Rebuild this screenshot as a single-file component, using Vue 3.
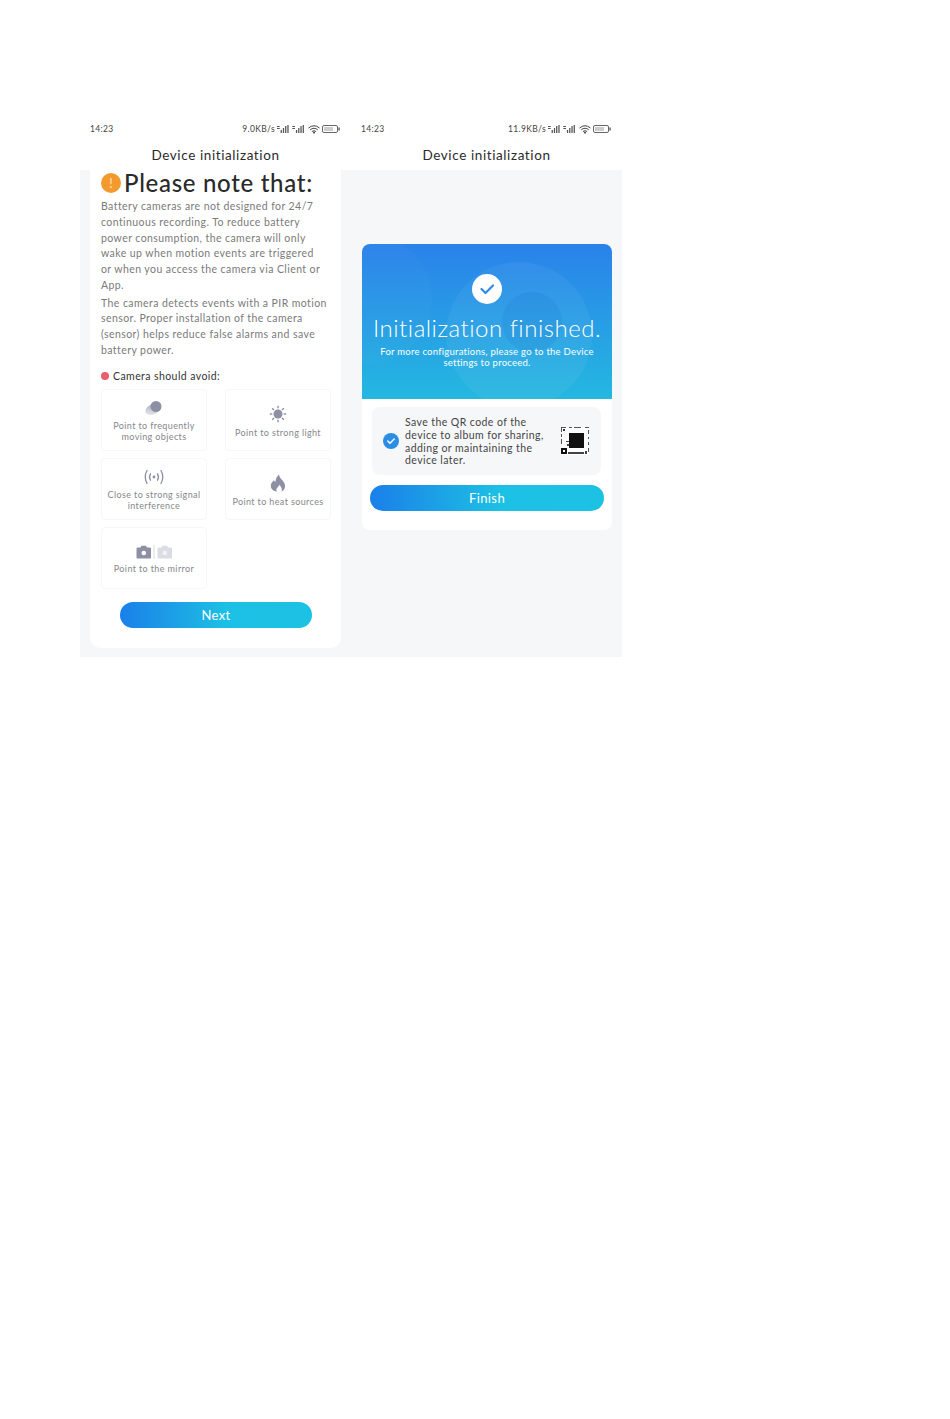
<script setup>
const avoidItems = [
  { icon: 'moving', lines: ['Point to frequently', 'moving objects'] },
  { icon: 'light', lines: ['Point to strong light'] },
  { icon: 'signal', lines: ['Close to strong signal', 'interference'] },
  { icon: 'heat', lines: ['Point to heat sources'] },
  { icon: 'mirror', lines: ['Point to the mirror'] },
]

const rays = [0, 45, 90, 135, 180, 225, 270, 315]
</script>

<template>
  <div class="page">
    <div class="phones">
      <section class="phone">
        <div class="status">
          <span>14:23</span>
          <div class="status-right">
            <span>9.0KB/s</span>
            <svg class="bars" viewBox="0 0 30 8" width="27" height="8" preserveAspectRatio="none">
              <g fill="#555">
                <rect x="0" y="1" width="3" height="1" /><rect x="0" y="3" width="3" height="1" />
                <rect x="4" y="5" width="1.4" height="3" /><rect x="6.5" y="3" width="1.4" height="5" /><rect x="9" y="1" width="1.4" height="7" /><rect x="11.5" y="0" width="1.4" height="8" />
                <rect x="17" y="1" width="3" height="1" /><rect x="17" y="3" width="3" height="1" />
                <rect x="21" y="5" width="1.4" height="3" /><rect x="23.5" y="3" width="1.4" height="5" /><rect x="26" y="1" width="1.4" height="7" /><rect x="28.5" y="0" width="1.4" height="8" />
              </g>
            </svg>
            <svg viewBox="0 0 12 9" width="12" height="9">
              <path d="M.5 3 Q6 -1.5 11.500 3M2.200 4.800Q6 1.700 9.800 4.800M3.900 6.500Q6 4.900 8.100 6.500" fill="none" stroke="#444" stroke-width="1" />
              <path d="M4.800 7.600 L6 6.500 L7.200 7.600 L6 9Z" fill="#444" />
            </svg>
            <svg class="battery" viewBox="0 0 18 8" width="18" height="8">
              <rect x=".5" y=".5" width="15" height="7" rx="1.500" fill="none" stroke="#666" />
              <rect x="16.300" y="2.500" width="1.500" height="3" fill="#666" />
              <rect x="2" y="2" width="9" height="4" fill="#ccc" />
            </svg>
          </div>
        </div>
        <div class="nav">Device initialization</div>
        <div class="body">
          <div class="card note-card">
            <div class="note-title">
              <span class="warn">!</span>
              <h1>Please note that:</h1>
            </div>
            <p class="para first">Battery cameras are not designed for 24/7 continuous recording. To reduce battery power consumption, the camera will only wake up when motion events are triggered<br />or when you access the camera via Client or App.</p>
            <p class="para">The camera detects events with a PIR motion sensor. Proper installation of the camera (sensor) helps reduce false alarms and save battery power.</p>
            <div class="avoid-head">
              <span class="red-dot"></span>
              <span>Camera should avoid:</span>
            </div>
            <div class="tiles">
              <div class="tile" v-for="item in avoidItems" :key="item.icon">
                <svg v-if="item.icon === 'moving'" class="tile-icon" viewBox="0 0 20 16" width="20" height="16">
                  <defs>
                    <linearGradient id="blurTail" x1="0" y1="1" x2="1" y2="0">
                      <stop offset="0" stop-color="#8d90a5" stop-opacity=".1" />
                      <stop offset="1" stop-color="#8d90a5" stop-opacity=".9" />
                    </linearGradient>
                  </defs>
                  <ellipse cx="8.500" cy="9.500" rx="7.500" ry="5" fill="url(#blurTail)" transform="rotate(-25 8.500 9.500)" />
                  <circle cx="12" cy="6.500" r="5.500" fill="#8d90a5" />
                </svg>
                <svg v-else-if="item.icon === 'light'" class="tile-icon" viewBox="0 0 18 18" width="18" height="18">
                  <circle cx="9" cy="9" r="4.500" fill="#8d90a5" />
                  <rect v-for="r in rays" :key="r" x="8.300" y="0.800" width="1.400" height="2.500" fill="#8d90a5" :transform="`rotate(${r} 9 9)`" />
                </svg>
                <svg v-else-if="item.icon === 'signal'" class="tile-icon" viewBox="0 0 22 16" width="22" height="16">
                  <circle cx="11" cy="8" r="1.400" fill="#8d90a5" />
                  <g fill="none" stroke="#8d90a5" stroke-width="1.300" stroke-linecap="round">
                    <path d="M7.500 4.800Q5.500 8 7.500 11.200M14.500 4.800Q16.500 8 14.500 11.200" />
                    <path d="M4 1.500Q0.500 8 4 14.500M18 1.500Q21.500 8 18 14.500" />
                  </g>
                </svg>
                <svg v-else-if="item.icon === 'heat'" class="tile-icon" viewBox="0 0 16 18" width="16" height="18">
                  <path d="M9 0.500C9.500 3.500 11 4.500 12.500 6.500C14 8.500 15.500 10.500 15 13C14.600 15.500 13 17 11.500 17.500C12.300 15.500 11.800 13 9.300 10.700C8.800 12.500 7 13.500 6.500 15C6.200 16 6.500 17 7 17.500C3.500 17.200 0.800 15 0.800 11.700C0.800 8.500 3.500 7.500 4 6C4.200 7 4.800 7.500 5.500 7.800C5.500 5 7 2 9 0.500Z" fill="#8d90a5" />
                </svg>
                <svg v-else class="tile-icon" viewBox="0 0 36 14" width="36" height="14">
                  <path d="M1.500 2.500H4.500L5.500 .8H10L11 2.500H14a1 1 0 0 1 1 1V12.500a1 1 0 0 1 -1 1H1.500a1 1 0 0 1 -1 -1V3.500a1 1 0 0 1 1 -1Z" fill="#8d90a5" />
                  <circle cx="7.800" cy="8" r="2.300" fill="#fff" />
                  <rect x="17.500" y="0" width="1" height="14" fill="#d8dae2" />
                  <path d="M22.500 2.500H25.500L26.500 .8H31L32 2.500H35a1 1 0 0 1 1 1V12.500a1 1 0 0 1 -1 1H22.500a1 1 0 0 1 -1 -1V3.500a1 1 0 0 1 1 -1Z" fill="#dcdde3" />
                  <circle cx="28.800" cy="8" r="2.300" fill="#f2f3f5" />
                </svg>
                <div class="tile-text">
                  <div v-for="line in item.lines" :key="line">{{ line }}</div>
                </div>
              </div>
            </div>
            <button class="action next">Next</button>
          </div>
        </div>
      </section>

      <section class="phone">
        <div class="status">
          <span>14:23</span>
          <div class="status-right">
            <span>11.9KB/s</span>
            <svg class="bars" viewBox="0 0 30 8" width="27" height="8" preserveAspectRatio="none">
              <g fill="#555">
                <rect x="0" y="1" width="3" height="1" /><rect x="0" y="3" width="3" height="1" />
                <rect x="4" y="5" width="1.4" height="3" /><rect x="6.5" y="3" width="1.4" height="5" /><rect x="9" y="1" width="1.4" height="7" /><rect x="11.5" y="0" width="1.4" height="8" />
                <rect x="17" y="1" width="3" height="1" /><rect x="17" y="3" width="3" height="1" />
                <rect x="21" y="5" width="1.4" height="3" /><rect x="23.5" y="3" width="1.4" height="5" /><rect x="26" y="1" width="1.4" height="7" /><rect x="28.5" y="0" width="1.4" height="8" />
              </g>
            </svg>
            <svg viewBox="0 0 12 9" width="12" height="9">
              <path d="M.5 3 Q6 -1.5 11.500 3M2.200 4.800Q6 1.700 9.800 4.800M3.900 6.500Q6 4.900 8.100 6.500" fill="none" stroke="#444" stroke-width="1" />
              <path d="M4.800 7.600 L6 6.500 L7.200 7.600 L6 9Z" fill="#444" />
            </svg>
            <svg class="battery" viewBox="0 0 18 8" width="18" height="8">
              <rect x=".5" y=".5" width="15" height="7" rx="1.500" fill="none" stroke="#666" />
              <rect x="16.300" y="2.500" width="1.500" height="3" fill="#666" />
              <rect x="2" y="2" width="9" height="4" fill="#ccc" />
            </svg>
          </div>
        </div>
        <div class="nav">Device initialization</div>
        <div class="body done-body">
          <div class="card done-card">
            <div class="hero">
              <span class="hero-blob big"></span>
              <span class="hero-blob inner"></span>
              <span class="hero-blob side"></span>
              <span class="hero-check">
                <svg viewBox="0 0 30 30" width="30" height="30">
                  <path d="M9.500 15L13.500 19L21 11.500" fill="none" stroke="#2f8ae6" stroke-width="2.200" stroke-linecap="round" stroke-linejoin="round" />
                </svg>
              </span>
              <h2>Initialization finished.</h2>
              <p>For more configurations, please go to the Device settings to proceed.</p>
            </div>
            <div class="qr-panel">
              <span class="qr-check">
                <svg viewBox="0 0 16 16" width="16" height="16">
                  <path d="M4.800 8L7 10.200L11.200 6" fill="none" stroke="#fff" stroke-width="1.500" stroke-linecap="round" stroke-linejoin="round" />
                </svg>
              </span>
              <div class="qr-text">Save the QR code of the device to album for sharing, adding or maintaining the device later.</div>
              <svg class="qr" viewBox="0 0 28 28" width="28" height="28">
                <rect width="28" height="28" fill="#fff" />
                <rect x="8" y="6" width="15" height="15" fill="#111" />
                <path d="M0 0h5v1h-4v4h-1zM8 0h3v1h-3zM13 0h7v1h-7zM24 0h4v1h-4zM27 3h1v4h-1zM27 10h1v2h-1zM27 15h1v3h-1zM27 21h1v4h-1zM0 7h1v3h-1zM0 12h1v5h-1z" fill="#555" />
                <rect x="2" y="2" width="2" height="2" fill="#333" />
                <path d="M0 21h6v6h-6zM2 23v2h2v-2z" fill="#111" fill-rule="evenodd" />
                <path d="M7 25h16v2h-16zM24 24h2v3h-2zM5 14h3v1h-3zM6 17h2v2h-2z" fill="#444" />
              </svg>
            </div>
            <button class="action finish">Finish</button>
          </div>
        </div>
      </section>
    </div>
  </div>
</template>

<style scoped>
.page {
  padding: 120px 0 0 80px;
  height: 1299px;
  box-sizing: border-box;
  background: #fff;
  font-family: Lato, "Open Sans", sans-serif;
}
.phones {
  display: flex;
  width: 542px;
}
.phone {
  width: 271px;
  display: flex;
  flex-direction: column;
}
.status {
  height: 18px;
  padding: 0 11px 0 10px;
  display: flex;
  align-items: center;
  justify-content: space-between;
  font-size: 8.5px;
  letter-spacing: .35px;
  color: #444;
}
.status-right {
  display: flex;
  align-items: center;
  gap: 2px;
}
.bars {
  margin-right: 2px;
}
.nav {
  height: 32px;
  line-height: 34px;
  text-align: center;
  font-size: 13.5px;
  letter-spacing: .6px;
  color: #2b2b2b;
}
.body {
  background: #f5f7f9;
  height: 487px;
  padding: 0 10px;
  box-sizing: border-box;
}
.card {
  background: #fff;
  border-radius: 0 0 10px 10px;
}
.note-card {
  padding: 3px 10px 20px 11px;
}
.note-title {
  display: flex;
  align-items: center;
  gap: 3px;
  height: 20px;
}
.warn {
  width: 20px;
  height: 20px;
  flex: none;
  border-radius: 50%;
  background: #f39a2e;
  color: #fbe3c0;
  font-size: 13px;
  line-height: 20px;
  text-align: center;
}
h1 {
  margin: -2px 0 0;
  font-size: 24px;
  font-weight: 500;
  letter-spacing: .7px;
  color: #2a2a2a;
  white-space: nowrap;
}
.para {
  margin: 2px 0 0;
  font-size: 10.5px;
  letter-spacing: .42px;
  line-height: 15.75px;
  color: #7a7a7a;
}
.para.first {
  margin-top: 6px;
}
.avoid-head {
  margin-top: 9px;
  display: flex;
  align-items: center;
  gap: 4px;
  font-size: 10.5px;
  letter-spacing: .42px;
  line-height: 16px;
  color: #333;
}
.red-dot {
  width: 8px;
  height: 8px;
  border-radius: 50%;
  background: #e8606a;
}
.tiles {
  margin-top: 5px;
  display: grid;
  grid-template-columns: 106px 106px;
  column-gap: 18px;
  row-gap: 7px;
}
.tile {
  height: 62px;
  padding-top: 4px;
  box-sizing: border-box;
  border: 1px solid #f6f7f9;
  border-radius: 4px;
  display: flex;
  flex-direction: column;
  align-items: center;
  justify-content: center;
  gap: 5px;
}
.tile-icon {
  flex: none;
}
.tile-text {
  font-size: 9px;
  line-height: 10.6px;
  letter-spacing: .38px;
  color: #85878c;
  text-align: center;
  white-space: nowrap;
}
.action {
  display: block;
  height: 26px;
  padding: 0;
  border: none;
  border-radius: 13px;
  background: linear-gradient(90deg, #1a80ea 0%, #1c9ce6 25%, #1cc0e4 55%, #1cc2e4 100%);
  color: #fff;
  font-family: inherit;
  font-size: 13px;
  letter-spacing: .4px;
}
.next {
  width: 192px;
  margin: 13px 0 0 19px;
}
.done-body {
  padding: 74px 10px 0 11px;
}
.done-card {
  border-radius: 8px;
  height: 286px;
}
.hero {
  position: relative;
  overflow: hidden;
  height: 155px;
  border-radius: 8px 8px 0 0;
  background: linear-gradient(180deg, #2a82ea 0%, #24b8e0 100%);
  text-align: center;
  color: #fff;
}
.hero-blob {
  position: absolute;
  border-radius: 50%;
}
.hero-blob.big {
  left: 84px;
  top: 18px;
  width: 146px;
  height: 146px;
  background: rgba(255, 255, 255, .05);
}
.hero-blob.inner {
  left: 140px;
  top: 48px;
  width: 60px;
  height: 60px;
  background: rgba(20, 100, 200, .12);
}
.hero-blob.side {
  left: -60px;
  top: -10px;
  width: 130px;
  height: 130px;
  background: rgba(255, 255, 255, .02);
}
.hero-check {
  position: relative;
  display: block;
  width: 30px;
  height: 30px;
  margin: 30px auto 0;
  border-radius: 50%;
  background: #fff;
}
h2 {
  position: relative;
  margin: 9px 0 0;
  font-size: 24px;
  line-height: 30px;
  font-weight: 300;
  letter-spacing: .5px;
  white-space: nowrap;
}
.hero p {
  position: relative;
  margin: 3px auto 0;
  width: 226px;
  font-size: 9.5px;
  letter-spacing: .25px;
  line-height: 11px;
}
.qr-panel {
  margin: 8px 11px 0 10px;
  height: 68px;
  padding: 0 12px 0 11px;
  border-radius: 8px;
  background: #f6f7f9;
  display: flex;
  align-items: center;
}
.qr-check {
  width: 16px;
  height: 16px;
  flex: none;
  border-radius: 50%;
  background: #2b8ee4;
}
.qr-text {
  margin-left: 6px;
  padding-top: 1px;
  width: 150px;
  font-size: 10.5px;
  letter-spacing: .42px;
  line-height: 12.7px;
  color: #444;
}
.qr {
  flex: none;
  margin-left: auto;
}
.finish {
  width: 234px;
  margin: 10px 0 0 8px;
}
</style>
